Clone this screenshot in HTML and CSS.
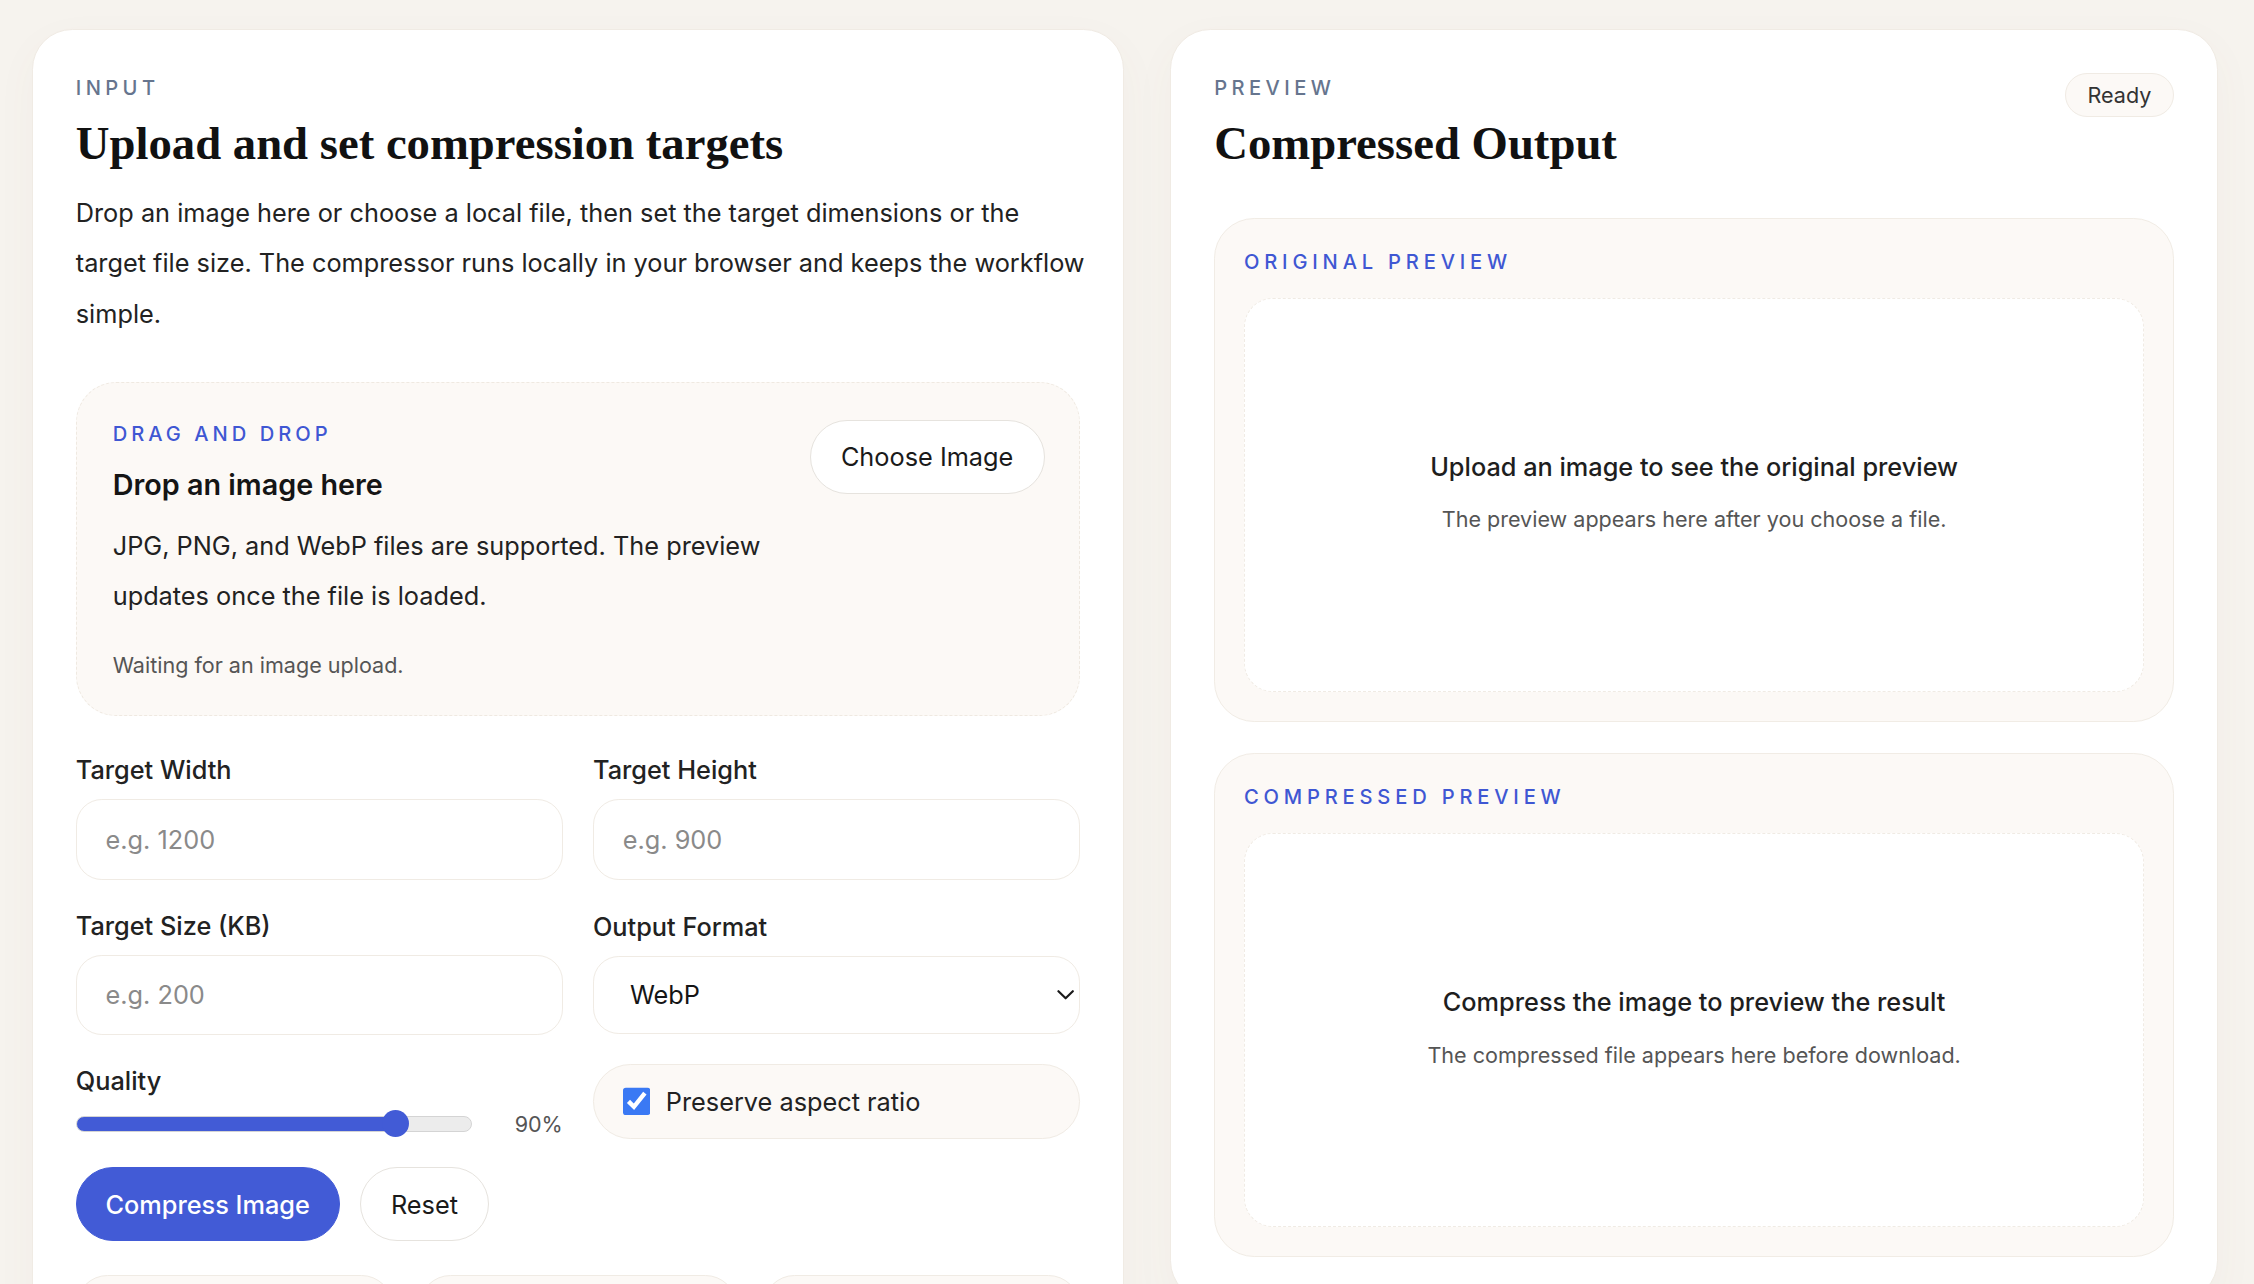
FILE: index.html
```html
<!DOCTYPE html>
<html lang="en">
<head>
<meta charset="utf-8">
<title>Image Compressor</title>
<link rel="stylesheet" href="styles.css">
</head>
<body>
<main class="layout">
  <section class="card">
    <p class="eyebrow">Input</p>
    <h1 class="title">Upload and set compression targets</h1>
    <p class="lead">Drop an image here or choose a local file, then set the target dimensions or the target file size. The compressor runs locally in your browser and keeps the workflow simple.</p>

    <div class="dropzone">
      <div class="drop-copy">
        <p class="kicker">Drag and drop</p>
        <h2 class="drop-title">Drop an image here</h2>
        <p class="drop-text">JPG, PNG, and WebP files are supported. The preview updates once the file is loaded.</p>
        <p class="status">Waiting for an image upload.</p>
      </div>
      <button class="btn btn-ghost btn-choose" type="button">Choose Image</button>
    </div>

    <div class="form-grid">
      <label class="field">
        <span class="field-label">Target Width</span>
        <input class="text-input" type="text" placeholder="e.g. 1200">
      </label>
      <label class="field">
        <span class="field-label">Target Height</span>
        <input class="text-input" type="text" placeholder="e.g. 900">
      </label>
      <label class="field">
        <span class="field-label">Target Size (KB)</span>
        <input class="text-input" type="text" placeholder="e.g. 200">
      </label>
      <label class="field">
        <span class="field-label">Output Format</span>
        <span class="select-wrap">
          <select class="select-input">
            <option>WebP</option>
            <option>JPEG</option>
            <option>PNG</option>
          </select>
          <svg class="chevron" viewBox="0 0 12 8" width="12" height="8" aria-hidden="true"><path d="M1 1.5 6 6.5 11 1.5" fill="none" stroke="#1a1a1a" stroke-width="1.5" stroke-linecap="round" stroke-linejoin="round"/></svg>
        </span>
      </label>
      <div class="field">
        <span class="field-label">Quality</span>
        <div class="range-row">
          <input class="range" type="range" min="40" max="100" value="90" style="--fill: 81%">
          <span class="range-value">90%</span>
        </div>
      </div>
      <label class="check-box">
        <input class="check" type="checkbox" checked>
        <span>Preserve aspect ratio</span>
      </label>
    </div>

    <div class="actions">
      <button class="btn btn-primary" type="button">Compress Image</button>
      <button class="btn btn-ghost" type="button">Reset</button>
    </div>

    <div class="stats" aria-label="Compression summary">
      <div class="stat"></div>
      <div class="stat"></div>
      <div class="stat"></div>
    </div>
  </section>

  <section class="card">
    <div class="card-head">
      <div>
        <p class="eyebrow">Preview</p>
        <h1 class="title">Compressed Output</h1>
      </div>
      <span class="badge">Ready</span>
    </div>

    <div class="panel">
      <p class="kicker kicker-wide">Original preview</p>
      <div class="empty">
        <p class="empty-title">Upload an image to see the original preview</p>
        <p class="empty-text">The preview appears here after you choose a file.</p>
      </div>
    </div>

    <div class="panel">
      <p class="kicker kicker-wide">Compressed preview</p>
      <div class="empty">
        <p class="empty-title">Compress the image to preview the result</p>
        <p class="empty-text">The compressed file appears here before download.</p>
      </div>
    </div>
  </section>
</main>
</body>
</html>
```

FILE: styles.css
```css
html {
  zoom: 1.4375;
}

* {
  box-sizing: border-box;
}

body {
  margin: 0;
  padding: 20px 25px 40px 22px;
  background: #f6f3ee;
  font-family: Inter, "Noto Sans", sans-serif;
  color: #1e1e1e;
}

p, h1, h2 {
  margin: 0;
}

.layout {
  display: grid;
  grid-template-columns: minmax(0, 760fr) minmax(0, 729fr);
  gap: 32px;
  align-items: start;
}

.card {
  background: #ffffff;
  border: 1px solid #f0ebe4;
  border-radius: 28px;
  padding: 31px 30px 30px;
  box-shadow: 0 10px 30px rgba(120, 100, 70, 0.04);
}

.eyebrow {
  font-size: 14px;
  line-height: 20px;
  letter-spacing: 0.22em;
  text-transform: uppercase;
  color: #66758e;
  font-weight: 500;
}

.title {
  margin-top: 8px;
  font-family: "Liberation Serif", "DejaVu Serif", serif;
  font-weight: 700;
  font-size: 32.5px;
  line-height: 40px;
  color: #111111;
}

.lead {
  margin-top: 11px;
  margin-right: -6px;
  font-size: 17.6px;
  line-height: 35px;
  color: #222222;
}

.dropzone {
  margin-top: 30px;
  display: flex;
  justify-content: space-between;
  align-items: flex-start;
  gap: 24px;
  background: #fcf9f6;
  border: 1px dashed #efe9e1;
  border-radius: 28px;
  padding: 26px 24px 23px 25px;
}

.drop-copy {
  max-width: 465px;
}

.kicker {
  font-size: 14px;
  line-height: 20px;
  letter-spacing: 0.2em;
  text-transform: uppercase;
  color: #3f57d3;
  font-weight: 500;
}

.kicker-wide {
  letter-spacing: 0.24em;
}

.drop-title {
  margin-top: 11px;
  font-size: 20px;
  line-height: 28px;
  font-weight: 600;
  color: #151515;
}

.drop-text {
  margin-top: 11px;
  font-size: 17.6px;
  line-height: 35px;
  color: #222222;
}

.status {
  margin-top: 20px;
  font-size: 15px;
  line-height: 22px;
  color: #555555;
}

.btn {
  font-family: inherit;
  font-size: 17.6px;
  border-radius: 999px;
  height: 51px;
  padding: 0 21px;
  cursor: pointer;
}

.btn-ghost {
  background: #ffffff;
  border: 1px solid #e6e3de;
  color: #1a1a1a;
}

.btn-choose {
  flex: none;
}

.btn-primary {
  background: #425bd6;
  border: 1px solid #425bd6;
  color: #ffffff;
  font-weight: 500;
  padding: 0 20px;
}

.form-grid {
  margin-top: 26px;
  display: grid;
  grid-template-columns: 1fr 1fr;
  column-gap: 21px;
  row-gap: 20px;
  align-items: center;
}

.field {
  display: flex;
  flex-direction: column;
  gap: 8px;
}

.field-label {
  font-size: 17.6px;
  line-height: 24px;
  font-weight: 500;
  color: #222222;
}

.text-input,
.select-input {
  font-family: inherit;
  font-size: 17.6px;
  height: 56px;
  border: 1px solid #f0ebe4;
  border-radius: 18px;
  background: #ffffff;
  padding: 0 20px;
  color: #1a1a1a;
  outline: none;
}

.text-input::placeholder {
  color: #8a8a8a;
}

.select-wrap {
  position: relative;
  display: block;
}

.select-input {
  -webkit-appearance: none;
  appearance: none;
  width: 100%;
  height: 54px;
  padding-left: 25px;
  padding-right: 30px;
  color: #151515;
}

.chevron {
  position: absolute;
  right: 4px;
  top: 23px;
  pointer-events: none;
}

.range-row {
  display: grid;
  grid-template-columns: 1fr auto;
  align-items: center;
  column-gap: 30px;
  height: 20px;
}

.range {
  -webkit-appearance: none;
  appearance: none;
  width: 100%;
  margin: 0;
  height: 20px;
  background: transparent;
}

.range::-webkit-slider-runnable-track {
  height: 11px;
  border-radius: 6px;
  border: 1px solid #d4d4d4;
  background: linear-gradient(to right, #425bd6 0, #425bd6 var(--fill), #ececec var(--fill), #ececec 100%);
}

.range::-webkit-slider-thumb {
  -webkit-appearance: none;
  appearance: none;
  width: 19px;
  height: 19px;
  margin-top: -5px;
  border-radius: 50%;
  background: #425bd6;
  border: none;
}

.range-value {
  font-size: 15px;
  color: #555555;
}

.check-box {
  display: flex;
  align-items: center;
  gap: 10px;
  height: 52px;
  padding: 0 20px;
  background: #fcf9f6;
  border: 1px solid #f0ebe4;
  border-radius: 26px;
  font-size: 17.6px;
  color: #222222;
}

.check {
  width: 20px;
  height: 20px;
  margin: 0;
  accent-color: #3a79f4;
}

.actions {
  margin-top: 20px;
  display: flex;
  gap: 14px;
}

.stats {
  margin-top: 24px;
  display: grid;
  grid-template-columns: repeat(3, 1fr);
  gap: 18px;
}

.stat {
  height: 84px;
  background: #fcf9f6;
  border: 1px solid #f0ebe4;
  border-radius: 22px;
}

.card-head {
  display: flex;
  justify-content: space-between;
  align-items: flex-start;
  margin-bottom: 32px;
}

.badge {
  margin-top: -1px;
  display: inline-flex;
  align-items: center;
  height: 31px;
  padding: 0 15px;
  background: #fcf9f6;
  border: 1px solid #f0ebe4;
  border-radius: 999px;
  font-size: 15px;
  color: #333333;
}

.panel {
  background: #fcf9f6;
  border: 1px solid #f1ece5;
  border-radius: 28px;
  padding: 20px 20px 20px;
}

.panel + .panel {
  margin-top: 22px;
}

.empty {
  margin-top: 15px;
  height: 274px;
  background: #ffffff;
  border: 1px dashed #f0ebe4;
  border-radius: 20px;
  display: flex;
  flex-direction: column;
  align-items: center;
  justify-content: center;
  gap: 14px;
  padding-bottom: 3px;
  text-align: center;
}

.empty-title {
  font-size: 17.6px;
  line-height: 24px;
  font-weight: 500;
  color: #1e1e1e;
}

.empty-text {
  font-size: 15px;
  line-height: 22px;
  color: #555555;
}
```
